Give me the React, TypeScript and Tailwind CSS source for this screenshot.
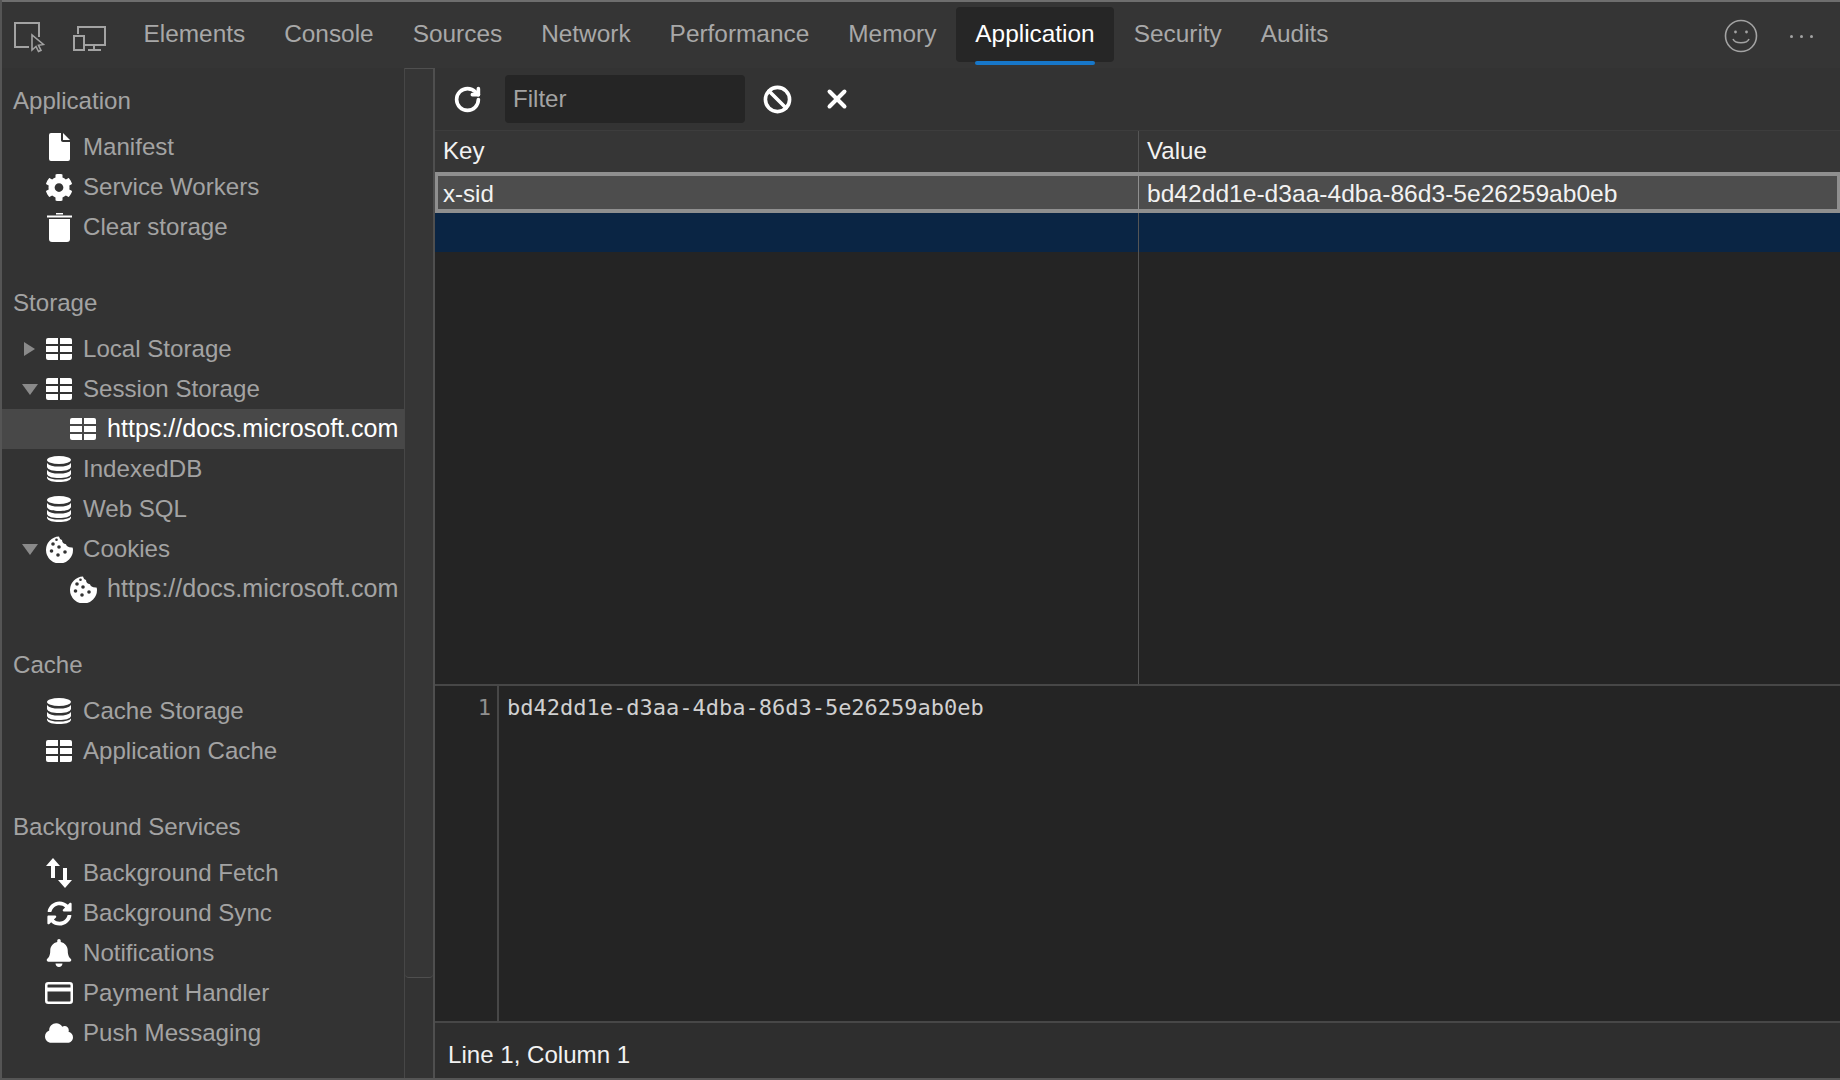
import React from 'react';
import { Ban, RotateCw, X } from 'lucide-react';
import { FaBell, FaCloud, FaCog, FaSyncAlt } from 'react-icons/fa';

const TableIcon = () => (
    <svg width="26" height="22" viewBox="0 0 26 22" fill="#fff">
        <path d="M2 0h10v6H0V2a2 2 0 0 1 2-2z" />
        <path d="M14 0h10a2 2 0 0 1 2 2v4H14z" />
        <rect x="0" y="8" width="12" height="6" />
        <rect x="14" y="8" width="12" height="6" />
        <path d="M0 16h12v6H2a2 2 0 0 1-2-2z" />
        <path d="M14 16h12v4a2 2 0 0 1-2 2H14z" />
    </svg>
);

const DbIcon = () => (
    <svg width="24" height="26" viewBox="0 0 24 26" fill="#fff">
        <ellipse cx="12" cy="4" rx="12" ry="4" />
        <path d="M0 7c2 2.600 6 3.600 12 3.600S22 9.600 24 7v4c-1 3-6 4-12 4S1 14 0 11z" />
        <path d="M0 14c2 2.600 6 3.600 12 3.600S22 16.600 24 14v4c-1 3-6 4-12 4S1 21 0 18z" />
        <path d="M0 20.500c2 2.200 6 3.100 12 3.100s10-.9 12-3.100V22c-1 3-6 4-12 4S1 25 0 22z" />
    </svg>
);

const CookieIcon = () => (
    <svg width="27" height="27" viewBox="0 0 27 27">
        <path d="M13 .5c.5 2 1.500 3.200 3 3.500.2 2.500 1.500 4 4 4.200.3 2 2.500 3.500 6.500 3.300.5 1 .5 2 .5 2.500a13.500 13.500 0 1 1-14-13.500z" fill="#fff" />
        <g fill="#333333">
            <circle cx="7" cy="8" r="1.800" />
            <circle cx="13" cy="11" r="1.800" />
            <circle cx="5.500" cy="15" r="1.800" />
            <circle cx="12" cy="19" r="1.800" />
            <circle cx="19" cy="16" r="1.800" />
            <circle cx="10.500" cy="3.800" r="1.300" />
        </g>
    </svg>
);

const FileIcon = () => (
    <svg width="21" height="28" viewBox="0 0 21 28" fill="#fff">
        <path d="M2 0h10v7c0 1 .8 2 2 2h7v17a2 2 0 0 1-2 2H2a2 2 0 0 1-2-2V2a2 2 0 0 1 2-2z" />
        <path d="M14 0l7 7h-7z" />
    </svg>
);

const TrashIcon = () => (
    <svg width="25" height="29" viewBox="0 0 25 29" fill="#fff">
        <path d="M9 0h7v1.500H9z" />
        <rect x="0" y="2.500" width="25" height="2" />
        <path d="M2 6h21v20a3 3 0 0 1-3 3H5a3 3 0 0 1-3-3z" />
    </svg>
);

const FetchIcon = () => (
    <svg width="28" height="30" viewBox="0 0 28 30" fill="#fff">
        <path d="M8 0l7 8h-5v12H6V8H1z" />
        <path d="M20 30l-7-8h5V10h4v12h5z" />
    </svg>
);

const CardIcon = () => (
    <svg width="28" height="22" viewBox="0 0 28 22" fill="none" stroke="#fff" strokeWidth="2.500">
        <rect x="1.250" y="1.250" width="25.500" height="19.500" rx="2" />
        <path d="M1 7.500h26" strokeWidth="4" />
    </svg>
);

const InspectIcon = () => (
    <svg width="32" height="32" viewBox="0 0 32 32" fill="none" stroke="#a3a3a3" strokeWidth="2">
        <path d="M26 16V2H2v24h14" />
        <path d="M19 14v15l4-3.500 2.500 5 2.500-1.200-2.500-5 5-.8z" fill="#333333" strokeWidth="1.600" />
    </svg>
);

const DeviceIcon = () => (
    <svg width="33" height="26" viewBox="0 0 33 26" fill="none" stroke="#a3a3a3" strokeWidth="2">
        <path d="M5 9V2h27v18H12" />
        <rect x="1" y="11" width="10" height="14" />
        <path d="M15 25h13M21 20v5" />
    </svg>
);

const SmileIcon = () => (
    <svg width="34" height="34" viewBox="0 0 34 34" fill="none" stroke="#a3a3a3" strokeWidth="1.600">
        <circle cx="17" cy="17" r="15.500" />
        <circle cx="11.500" cy="13" r="1.400" fill="#a3a3a3" stroke="none" />
        <circle cx="22.500" cy="13" r="1.400" fill="#a3a3a3" stroke="none" />
        <path d="M9 20c2 5 14 5 16 0" />
    </svg>
);

type Row = { label: string; icon: React.ReactNode; arrow?: 'right' | 'down'; nested?: boolean; active?: boolean };

const sections: { title: string; rows: Row[] }[] = [
    {
        title: 'Application',
        rows: [
            { label: 'Manifest', icon: <FileIcon /> },
            { label: 'Service Workers', icon: <FaCog size={29} color="#fff" /> },
            { label: 'Clear storage', icon: <TrashIcon /> },
        ],
    },
    {
        title: 'Storage',
        rows: [
            { label: 'Local Storage', icon: <TableIcon />, arrow: 'right' },
            { label: 'Session Storage', icon: <TableIcon />, arrow: 'down' },
            { label: 'https://docs.microsoft.com', icon: <TableIcon />, nested: true, active: true },
            { label: 'IndexedDB', icon: <DbIcon /> },
            { label: 'Web SQL', icon: <DbIcon /> },
            { label: 'Cookies', icon: <CookieIcon />, arrow: 'down' },
            { label: 'https://docs.microsoft.com', icon: <CookieIcon />, nested: true },
        ],
    },
    {
        title: 'Cache',
        rows: [
            { label: 'Cache Storage', icon: <DbIcon /> },
            { label: 'Application Cache', icon: <TableIcon /> },
        ],
    },
    {
        title: 'Background Services',
        rows: [
            { label: 'Background Fetch', icon: <FetchIcon /> },
            { label: 'Background Sync', icon: <FaSyncAlt size={25} color="#fff" /> },
            { label: 'Notifications', icon: <FaBell size={28} color="#fff" /> },
            { label: 'Payment Handler', icon: <CardIcon /> },
            { label: 'Push Messaging', icon: <FaCloud size={30} color="#fff" /> },
        ],
    },
];

const tabs = ['Elements', 'Console', 'Sources', 'Network', 'Performance', 'Memory', 'Application', 'Security', 'Audits'];

const TreeRow = ({ row }: { row: Row }) => (
    <div className={`flex h-10 items-center ${row.active ? 'bg-[#484848] text-white' : 'text-[#a3a3a3]'}`}>
        <div className={`flex h-full items-center justify-center ${row.nested ? 'w-[67px]' : 'w-[43px]'}`}>
            {row.arrow === 'right' && <div className="ml-[12px] h-0 w-0 border-y-[7px] border-l-[11px] border-y-transparent border-l-[#8a8a8a]" />}
            {row.arrow === 'down' && <div className="ml-[12px] h-0 w-0 border-x-[8px] border-t-[11px] border-x-transparent border-t-[#8a8a8a]" />}
        </div>
        <div className="flex w-[28px] shrink-0 items-center justify-center">{row.icon}</div>
        <span className={`ml-[10px] whitespace-nowrap ${row.nested ? 'text-[25.1px]' : ''}`}>{row.label}</span>
    </div>
);

export default function App() {
    return (
        <div className="flex h-[1080px] w-[1840px] flex-col overflow-hidden border-l-2 border-[#555555] bg-[#333333] font-['Liberation_Sans',Arial,sans-serif] text-[24.1px]">
            <div className="h-[2px] shrink-0 bg-[#6e6e6e]" />

            {/* top tab bar */}
            <div className="flex h-[66px] shrink-0 items-start bg-[#353535]">
                <div className="mt-[19px] ml-[11px] w-[32px]"><InspectIcon /></div>
                <div className="mt-[23px] ml-[28px] w-[33px]"><DeviceIcon /></div>
                <div className="ml-[18px] flex h-full items-start">
                    {tabs.map((tab) => (
                        <div
                            key={tab}
                            className={`relative mt-[5px] flex h-[55px] items-center rounded-t px-[19.5px] text-[24.4px] ${tab === 'Application' ? 'rounded-b bg-[#262626] text-white' : 'text-[#a8a8a8]'}`}
                        >
                            {tab}
                            {tab === 'Application' && <div className="absolute right-[19px] -bottom-[3px] left-[19px] h-[4px] rounded-full bg-[#1777c9]" />}
                        </div>
                    ))}
                </div>
                <div className="mt-[17px] ml-auto"><SmileIcon /></div>
                <div className="mt-[33px] mr-[27px] ml-[32px] flex gap-[7px]">
                    <div className="h-[3px] w-[3px] rounded-full bg-[#a3a3a3]" />
                    <div className="h-[3px] w-[3px] rounded-full bg-[#a3a3a3]" />
                    <div className="h-[3px] w-[3px] rounded-full bg-[#a3a3a3]" />
                </div>
            </div>

            <div className="flex min-h-0 flex-1 border-b-2 border-[#555555]">
                {/* sidebar */}
                <div className="w-[403px] shrink-0 overflow-hidden border-r border-[#474747] pt-[13px]">
                    {sections.map((section) => (
                        <div key={section.title} className="mb-9">
                            <div className="mb-1.5 flex h-10 items-center pl-[11px] text-[#a3a3a3]">{section.title}</div>
                            {section.rows.map((row) => (
                                <TreeRow key={row.label + row.nested} row={row} />
                            ))}
                        </div>
                    ))}
                </div>

                {/* scrollbar */}
                <div className="w-[30px] shrink-0 border-r-2 border-[#4f4f4f]">
                    <div className="h-[910px] rounded-b-sm border-y border-[#4f4f4f] bg-[#363636]" />
                </div>

                {/* main */}
                <div className="flex min-w-0 flex-1 flex-col">
                    <div className="flex h-[62px] shrink-0 items-center">
                        <RotateCw size={29} color="#fff" strokeWidth={3} className="ml-[18px]" />
                        <div className="ml-[23px] flex h-[48px] w-[240px] items-center rounded bg-[#252525] pl-2 text-[#a3a3a3]">Filter</div>
                        <Ban size={29} color="#fff" strokeWidth={3} className="ml-[18px]" />
                        <X size={30} color="#fff" strokeWidth={3.2} className="ml-[30px]" />
                    </div>

                    <div className="grid h-[42px] shrink-0 grid-cols-[704px_1fr] border-t border-[#3d3d3d] bg-[#363636] text-[#f2f2f2]">
                        <div className="flex items-center border-r border-[#555555] pl-2">Key</div>
                        <div className="flex items-center pl-2">Value</div>
                    </div>
                    <div className="grid h-[41px] shrink-0 grid-cols-[701px_1fr] border-x-[3px] border-y-4 border-[#8f8f8f] bg-[#4d4d4d] text-[#f2f2f2]">
                        <div className="flex items-center border-r border-[#8f8f8f] pb-[2px] pl-[5px]">x-sid</div>
                        <div className="flex items-center pb-[2px] pl-[8px] text-[24.6px]">bd42dd1e-d3aa-4dba-86d3-5e26259ab0eb</div>
                    </div>
                    <div className="grid h-[39px] shrink-0 grid-cols-[704px_1fr] bg-[#0a2544]">
                        <div className="border-r border-[#555555]" />
                        <div />
                    </div>
                    <div className="grid min-h-0 flex-1 grid-cols-[704px_1fr] border-b-2 border-[#474747] bg-[#242424]">
                        <div className="border-r border-[#555555]" />
                        <div />
                    </div>

                    {/* value preview */}
                    <div className="flex h-[335px] shrink-0 bg-[#242424]">
                        <div className="w-[64px] shrink-0 border-r-2 border-[#474747] pt-[5px] pr-[6px] text-right font-['DejaVu_Sans_Mono',monospace] text-[22px] text-[#8f8f8f]">1</div>
                        <div className="pt-[5px] pl-[8px] font-['DejaVu_Sans_Mono',monospace] text-[22px] text-[#d0d0d0]">bd42dd1e-d3aa-4dba-86d3-5e26259ab0eb</div>
                    </div>
                    <div className="flex h-[57px] shrink-0 items-center border-t-2 border-[#474747] bg-[#2e2e2e] pt-[9px] pl-[13px] text-[#f2f2f2]">Line 1, Column 1</div>
                </div>
            </div>
        </div>
    );
}
